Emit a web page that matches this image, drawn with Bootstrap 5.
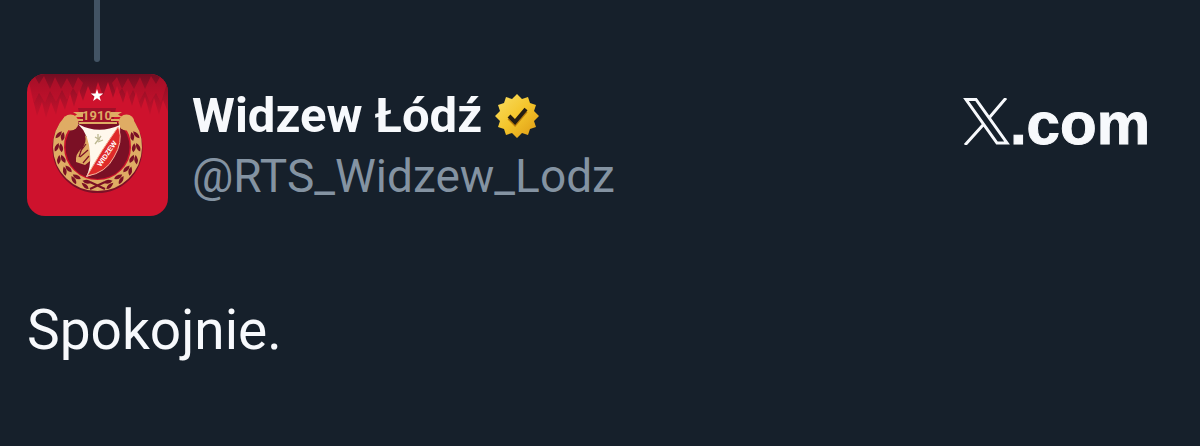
<!DOCTYPE html>
<html lang="pl">
<head>
<meta charset="utf-8">
<meta name="viewport" content="width=device-width, initial-scale=1">
<title>Widzew Łódź</title>
<link href="https://cdn.jsdelivr.net/npm/bootstrap@5.3.0/dist/css/bootstrap.min.css" rel="stylesheet">
<style>
  body { background: #16202b; color: #f7f9fc; font-family: Roboto, "Liberation Sans", sans-serif; }
  .thread { width: 6px; height: 62px; margin: 0 0 12px 94px; background: #425364; border-radius: 0 0 3px 3px; }
  .post { padding: 0 50px 0 27px; }
  .avatar { width: 141px; height: 142px; border-radius: 18px; }
  .who { margin: 12px 0 0 24px; }
  .who h1 { font-weight: 700; font-size: 49px; line-height: 60px; }
  .verified { margin-left: 12px; }
  .handle { font-size: 46px; line-height: 60px; color: #8493a2; }
  .brand { margin-top: 16px; font: 700 60px/68px "Liberation Sans", sans-serif; -webkit-text-stroke: 1px #f7f9fc; }
  .brand svg { margin-bottom: 6px; }
  .message { font-size: 55px; line-height: 64px; margin-top: 82px; }
</style>
</head>
<body>
<div class="thread"></div>
<article class="post">
  <header class="d-flex align-items-start">
    <svg class="avatar flex-shrink-0" viewBox="0 0 141 142" role="img" aria-label="Widzew">
      <defs>
        <linearGradient id="fade" x2="0" y2="1"><stop stop-color="#710d22"/><stop offset="1" stop-color="#b01029" stop-opacity=".3"/></linearGradient>
        <g id="leaf"><path d="M0-39q-4-5-9-3q3 5 9 3zM0-37q-5 5-9 2q4-5 9-2z"/></g>
      </defs>
      <rect width="141" height="142" fill="#ce122d"/>
      <path fill="url(#fade)" d="M0 0h141v38l-5-12-4 15-5-17-4 17-5-18-4 12-5-17-4 14-5-16-4 13-6-17-4 12-5-16-5 14-5-14-5 16-5-12-5 15-4-11-5 17-4-14-5 17-5-12-4 17-5-13-5 16-4-16-5 14z"/>
      <path fill="#c8102b" opacity=".55" d="M0 6l7-5 5 9 5-8 6 13 5-12 6 12 6-11 6 11 5-12 5 6-5 13-5-8-6 12-5-10-6 12-6-11-5 12-6-10-5 10zM141 6l-7-5-5 9-5-8-6 13-5-12-6 12-6-11-6 11-5-12-5 6 5 13 5-8 6 12 5-10 6 12 6-11 5 12 6-10 5 10z"/>
      <path fill="#fff" d="M70 15l1.500 4.500h4.800l-3.800 2.900 1.400 4.600-3.900-2.800-3.900 2.800 1.400-4.600-3.800-2.900h4.800z"/>
      <path d="M42 46a40 40 0 1 0 57 0" fill="none" stroke="#7d1027" stroke-width="10"/>
      <path d="M42 46a39 39 0 1 0 57 0" fill="none" stroke="#dfac64" stroke-width="11"/>
      <circle cx="70.500" cy="73" r="32" fill="#7b1025"/>
      <g transform="translate(70.500 73)" fill="#7b1025">
        <use href="#leaf" transform="rotate(-66)"/><use href="#leaf" transform="rotate(-84)"/><use href="#leaf" transform="rotate(-102)"/><use href="#leaf" transform="rotate(-120)"/><use href="#leaf" transform="rotate(-138)"/><use href="#leaf" transform="rotate(-156)"/>
        <g transform="scale(-1 1)"><use href="#leaf" transform="rotate(-66)"/><use href="#leaf" transform="rotate(-84)"/><use href="#leaf" transform="rotate(-102)"/><use href="#leaf" transform="rotate(-120)"/><use href="#leaf" transform="rotate(-138)"/><use href="#leaf" transform="rotate(-156)"/></g>
      </g>
      <path d="M63 108l15 7m-15 0l15-7" stroke="#7b1025" stroke-width="2"/>
      <path d="M51 34h38l-3 15H54z" fill="#a01028"/>
      <path d="M46 38h10v5H46l4-2.500zM95 38H84v5h11l-4-2.500zM49 45h7v2h-7zM84 45h8v2h-8z" fill="#dfac64"/>
      <path d="M52 49h38" stroke="#dfac64" stroke-width="2"/>
      <circle cx="43.500" cy="48.500" r="8" fill="#dfac64"/><circle cx="99.500" cy="48.500" r="8" fill="#dfac64"/>
      <text x="70" y="46" text-anchor="middle" font-family="Liberation Sans Narrow, Roboto, sans-serif" font-weight="700" font-size="13" fill="#dfac64">1910</text>
      <path d="M58 61q2 8-3 13-7 6-6 14l9 3 5-4v-20z" fill="#dfac64"/>
      <path d="M59 70l-6 8m8-2l-8 7m9-1l-6 7m0-18l-4 12" stroke="#7b1025" stroke-width="1.200"/>
      <path d="M51 50q20 11 42 1 1 12-4 25-9 21-30 27 5-9 4-23Q62 60 51 50z" fill="#fff8ec"/>
      <path d="M91 53Q75 75 60 102q19-3 27-19 9-15 5-28z" fill="#df2a29" stroke="#f4b49b" stroke-width="1"/>
      <path d="M68 70l6-8m-3 6l5-2m-8-3l5 3m-2-6v7" stroke="#bdb892" stroke-width="1.300"/>
      <text transform="translate(82 81) rotate(-56)" text-anchor="middle" font-family="Liberation Sans" font-weight="700" font-size="7" fill="#fff">WIDZEW</text>
    </svg>
    <div class="who">
      <div class="d-flex align-items-center">
        <h1 class="m-0">Widzew Łódź</h1>
        <svg class="verified" width="46" height="46" viewBox="-23 -23 46 46" role="img" aria-label="Verified">
          <defs><linearGradient id="gold" x2="1" y2="1"><stop stop-color="#f9df65"/><stop offset=".5" stop-color="#f4c52b"/><stop offset="1" stop-color="#dc9814"/></linearGradient></defs>
          <path fill="url(#gold)" d="M0-22l5 5 6-2 2 6 6 2-2 6 5 5-5 5 2 6-6 2-2 6-6-2-5 5-5-5-6 2-2-6-6-2 2-6-5-5 5-5-2-6 6-2 2-6 6 2z"/>
          <path d="M-8 1l6 6L9-6" fill="none" stroke="#b97c0c" stroke-width="4" transform="translate(0 1)"/>
          <path d="M-8 0l6 6L9-7" fill="none" stroke="#241d13" stroke-width="4"/>
        </svg>
      </div>
      <div class="handle">@RTS_Widzew_Lodz</div>
    </div>
    <div class="brand d-flex align-items-center ms-auto">
      <svg width="47" height="47" viewBox="0 0 47 47" role="img" aria-label="X"><path fill="none" stroke="#f7f9fc" stroke-width="3" d="M3 1.500h10L44 45H34zM43 0L26 20M20 27L2 47"/></svg><span>.com</span>
    </div>
  </header>
  <p class="message mb-0">Spokojnie.</p>
</article>
<script src="https://cdn.jsdelivr.net/npm/bootstrap@5.3.0/dist/js/bootstrap.bundle.min.js"></script>
</body>
</html>
